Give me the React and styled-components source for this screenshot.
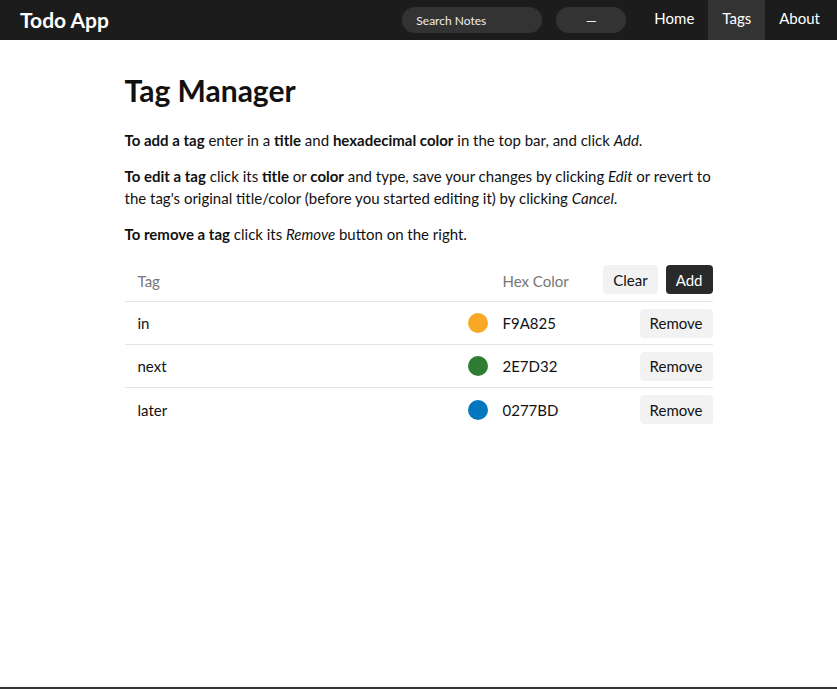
import styled, { createGlobalStyle } from "styled-components";

const GlobalStyle = createGlobalStyle`
	html, body {
		margin: 0;
		padding: 0;
		background: #fff;
		font-family: "Lato", "Liberation Sans", sans-serif;
		color: #111;
	}
	* { box-sizing: border-box; }
`;

const TAGS = [
	{ title: "in", color: "F9A825" },
	{ title: "next", color: "2E7D32" },
	{ title: "later", color: "0277BD" },
];

const App = () => {
	return (
		<Page>
			<GlobalStyle />
			<NavBar>
				<Brand>Todo App</Brand>
				<NavRight>
					<Pill $width={140} $pad="0 14px" $size={12}>Search Notes</Pill>
					<Pill $width={70} $center>—</Pill>
					<NavLinks>
						<NavLink>Home</NavLink>
						<NavLink $active>Tags</NavLink>
						<NavLink>About</NavLink>
					</NavLinks>
				</NavRight>
			</NavBar>

			<Content>
				<Heading>Tag Manager</Heading>
				<Para>
					<b>To add a tag</b> enter in a <b>title</b> and <b>hexadecimal color</b> in the top bar, and click <i>Add</i>.
				</Para>
				<Para>
					<b>To edit a tag</b> click its <b>title</b> or <b>color</b> and type, save your changes by clicking <i>Edit</i> or revert to
					the tag's original title/color (before you started editing it) by clicking <i>Cancel</i>.
				</Para>
				<Para>
					<b>To remove a tag</b> click its <i>Remove</i> button on the right.
				</Para>

				<Table>
					<HeadRow>
						<HeadCell>Tag</HeadCell>
						<span />
						<HeadCell>Hex Color</HeadCell>
						<Actions>
							<Button>Clear</Button>
							<Button $dark>Add</Button>
						</Actions>
					</HeadRow>
					{TAGS.map((tag) => (
						<Row key={tag.title}>
							<Cell>{tag.title}</Cell>
							<Swatch style={{ background: `#${tag.color}` }} />
							<Cell>{tag.color}</Cell>
							<Actions>
								<Button>Remove</Button>
							</Actions>
						</Row>
					))}
				</Table>
			</Content>

			<Footer />
		</Page>
	);
};

export default App;

const Page = styled.div`
	min-height: 100vh;
`;

const NavBar = styled.header`
	height: 40px;
	background: #1c1c1c;
	display: flex;
	align-items: center;
	justify-content: space-between;
	padding-left: 20px;
	padding-right: 3px;
`;

const Brand = styled.div`
	color: #fff;
	font-size: 21px;
	font-weight: 700;
	padding-bottom: 2px;
`;

const NavRight = styled.div`
	display: flex;
	align-items: center;
	height: 100%;
	gap: 14px;
`;

const Pill = styled.div`
	width: ${(p) => p.$width}px;
	height: 26px;
	border-radius: 13px;
	background: #333;
	color: #eee;
	font-size: ${(p) => p.$size || 14}px;
	display: flex;
	align-items: center;
	justify-content: ${(p) => (p.$center ? "center" : "flex-start")};
	padding: ${(p) => p.$pad || "0"};
`;

const NavLinks = styled.nav`
	display: flex;
	height: 100%;
`;

const NavLink = styled.a`
	display: flex;
	align-items: center;
	height: 100%;
	padding: 0 14px 5px;
	color: #fff;
	font-size: 15px;
	background: ${(p) => (p.$active ? "#333" : "transparent")};
	cursor: pointer;
`;

const Content = styled.main`
	width: 588px;
	margin: 0 auto;
	padding-top: 29px;
`;

const Heading = styled.h1`
	font-size: 30px;
	font-weight: 700;
	margin: 0 0 18px;
	line-height: 42px;
`;

const Para = styled.p`
	font-size: 15px;
	line-height: 22px;
	margin: 0 0 14px;

	&:last-of-type {
		margin-bottom: 13px;
	}
`;

const Table = styled.div``;

const Row = styled.div`
	display: grid;
	grid-template-columns: 1fr 35px 101px 109px;
	align-items: center;
	height: 43px;
	padding-left: 13px;
	border-bottom: 1px solid #e4e4e4;
	font-size: 15px;

	&:last-child {
		border-bottom: none;
	}
`;

const HeadRow = styled(Row)`
	height: 44px;
`;

const Cell = styled.div`
	color: #111;
`;

const HeadCell = styled.div`
	color: #777;
	padding-top: 2px;
`;

const Swatch = styled.span`
	width: 20px;
	height: 20px;
	border-radius: 50%;
`;

const Actions = styled.div`
	display: flex;
	justify-content: flex-end;
	gap: 8px;
`;

const Button = styled.button`
	font-family: inherit;
	font-size: 15px;
	height: 29px;
	padding: 0 10px;
	border: none;
	border-radius: 4px;
	background: ${(p) => (p.$dark ? "#2a2a2a" : "#f2f2f2")};
	color: ${(p) => (p.$dark ? "#fff" : "#111")};
	cursor: pointer;
`;

const Footer = styled.div`
	position: fixed;
	left: 0;
	right: 0;
	bottom: 0;
	height: 2px;
	background: #333;
	box-shadow: 0 0 10px rgba(0, 0, 0, 0.12);
`;
